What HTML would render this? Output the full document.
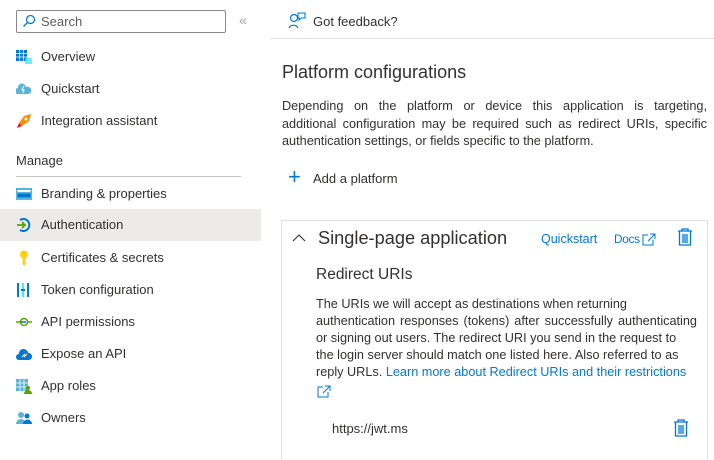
<!DOCTYPE html>
<html><head><meta charset="utf-8"><style>
*{margin:0;padding:0;box-sizing:border-box}
body{width:714px;height:441px;overflow:hidden;background:#fff;font-family:"Liberation Sans",sans-serif;color:#323130;position:relative;font-size:13px}
.a{position:absolute;white-space:nowrap}
.nav{position:absolute;left:0;width:261px;height:32px;}
.nav .ic{position:absolute;left:16px;top:8px;width:16px;height:16px}
.nav .t{position:absolute;left:41px;top:8px;font-size:13px}
.blue{color:#0078d4}
.ln{position:absolute;white-space:nowrap;text-align:justify;text-align-last:justify;font-size:12.7px;height:17.5px;line-height:17.5px}
.ln.l{text-align-last:left}
</style></head><body>
<div class="a" style="left:16px;top:10px;width:210px;height:23px;border:1px solid #8a8886;border-radius:2px"></div>
<svg class="a" style="left:22px;top:14px" width="14" height="14" viewBox="0 0 14 14"><circle cx="8.5" cy="5.5" r="4" fill="none" stroke="#0078d4" stroke-width="1.2"/><path d="M5.5 8.5L1.5 12.5" stroke="#0078d4" stroke-width="1.3"/></svg>
<div class="a" style="left:41px;top:14px;color:#605e5c;font-size:13px">Search</div>
<div class="a" style="left:239px;top:12px;color:#a19f9d;font-size:14px">«</div>

<div class="nav" style="top:41px"><svg class="ic" viewBox="0 0 16 16"><rect x="0" y="1" width="11" height="11" fill="#0078d4"/><path d="M0 4.5h11M0 8h11M3.7 1v11M7.3 1v11" stroke="#fff" stroke-width=".8"/><rect x="9" y="9" width="7" height="6" fill="#50e6ff" opacity=".8"/></svg><div class="t">Overview</div></div>
<div class="nav" style="top:73px"><svg class="ic" viewBox="0 0 16 16"><path d="M2 13a3 3 0 0 1 0-6 4 4 0 0 1 8-1 3.5 3.5 0 0 1 3 7z" fill="#59b4d9"/><path d="M8 5l-2 4h2l-1 3" stroke="#fff" stroke-width="1" fill="none"/></svg><div class="t">Quickstart</div></div>
<div class="nav" style="top:105px"><svg class="ic" viewBox="0 0 16 16"><path d="M15 1l-7 2-5 7 3 3 7-5z" fill="#ff8c00"/><path d="M3 10l-2 5 5-2z" fill="#e81123"/><circle cx="10" cy="6" r="1.5" fill="#fff"/></svg><div class="t">Integration assistant</div></div>
<div class="a" style="left:16px;top:153px;font-size:13px">Manage</div>
<div class="a" style="left:16px;top:176px;width:225px;height:1px;background:#c8c6c4"></div>
<div class="nav" style="top:178px"><svg class="ic" viewBox="0 0 16 16"><rect x="0" y="2" width="16" height="12" fill="#59b4d9"/><rect x="1.5" y="4" width="13" height="2" fill="#fff"/><rect x="1.5" y="7.5" width="13" height="4" fill="#0078d4"/></svg><div class="t">Branding &amp; properties</div></div>
<div class="nav" style="top:209px;background:#edebe9"><svg class="ic" viewBox="0 0 16 16"><path d="M4 3a6 6 0 1 1 0 10" fill="none" stroke="#0078d4" stroke-width="2"/><path d="M1 8h8M6 5l3 3-3 3" fill="none" stroke="#57a300" stroke-width="1.8"/></svg><div class="t">Authentication</div></div>
<div class="nav" style="top:242px"><svg class="ic" viewBox="0 0 16 16"><circle cx="8" cy="4.5" r="4" fill="#fcd116"/><path d="M6.5 8h3v6l-1.5 2-1.5-2z" fill="#fcd116"/><circle cx="8" cy="3.5" r="1" fill="#ffb900"/></svg><div class="t">Certificates &amp; secrets</div></div>
<div class="nav" style="top:274px"><svg class="ic" viewBox="0 0 16 16"><rect x="1" y="1" width="2" height="14" fill="#0078d4"/><rect x="6" y="1" width="2" height="14" fill="#50e6ff"/><rect x="11" y="1" width="2" height="14" fill="#0078d4"/><rect x="5" y="7" width="4" height="2" fill="#0078d4"/></svg><div class="t">Token configuration</div></div>
<div class="nav" style="top:306px"><svg class="ic" viewBox="0 0 16 16"><path d="M0 8h4M12 8h4" stroke="#57a300" stroke-width="1.5"/><circle cx="8" cy="8" r="3.5" fill="none" stroke="#57a300" stroke-width="1.5"/><path d="M5 8h5" stroke="#0078d4" stroke-width="1.5"/></svg><div class="t">API permissions</div></div>
<div class="nav" style="top:338px"><svg class="ic" viewBox="0 0 16 16"><path d="M3 14a3 3 0 0 1 0-6 4.5 4.5 0 0 1 9-1 3.5 3.5 0 0 1 1 7z" fill="#0078d4"/><path d="M6 11l3-3M8 11l3-3" stroke="#fff" stroke-width="1"/></svg><div class="t">Expose an API</div></div>
<div class="nav" style="top:370px"><svg class="ic" viewBox="0 0 16 16"><rect x="0" y="1" width="12" height="12" fill="#59b4d9"/><path d="M0 5h12M0 9h12M4 1v12M8 1v12" stroke="#fff" stroke-width=".8"/><circle cx="12" cy="10" r="2" fill="#57a300"/><path d="M8 16a4 4 0 0 1 8 0z" fill="#57a300"/></svg><div class="t">App roles</div></div>
<div class="nav" style="top:402px"><svg class="ic" viewBox="0 0 16 16"><circle cx="5" cy="5" r="3" fill="#59b4d9"/><path d="M0 14a5 5 0 0 1 10 0z" fill="#59b4d9"/><circle cx="11" cy="6" r="2.5" fill="#0078d4"/><path d="M7 14a4 4 0 0 1 9 0z" fill="#0078d4"/></svg><div class="t">Owners</div></div>

<svg class="a" style="left:288px;top:12px" width="18" height="18" viewBox="0 0 18 18"><circle cx="6" cy="6" r="3.5" fill="none" stroke="#0078d4" stroke-width="1.2"/><path d="M1 16a5 5 0 0 1 9 0" fill="none" stroke="#0078d4" stroke-width="1.2"/><path d="M10 1h7v5h-4l-2 2v-2h-1z" fill="none" stroke="#0078d4" stroke-width="1.1"/></svg>
<div class="a" style="left:313px;top:14px;font-size:13px">Got feedback?</div>
<div class="a" style="left:270px;top:38px;width:444px;height:1px;background:#e1dfdd"></div>
<div class="a" style="left:282px;top:62px;font-size:18px">Platform configurations</div>
<div class="ln" style="left:282px;top:98px;width:425px">Depending on the platform or device this application is targeting,</div>
<div class="ln" style="left:282px;top:115.5px;width:425px">additional configuration may be required such as redirect URIs, specific</div>
<div class="ln l" style="left:282px;top:133px;width:425px">authentication settings, or fields specific to the platform.</div>
<div class="a" style="left:288px;top:166px;font-size:22px;font-weight:300;color:#0078d4;line-height:22px">+</div>
<div class="a" style="left:313px;top:171px;font-size:13px">Add a platform</div>

<div class="a" style="left:281px;top:220px;width:427px;height:240px;border:1px solid #e1dfdd;border-bottom:none"></div>
<svg class="a" style="left:292px;top:233px" width="14" height="10" viewBox="0 0 14 10"><path d="M1 8l6-6 6 6" fill="none" stroke="#323130" stroke-width="1.1"/></svg>
<div class="a" style="left:318px;top:228px;font-size:18.2px">Single-page application</div>
<div class="a blue" style="left:541px;top:232px;font-size:12.5px">Quickstart</div>
<div class="a blue" style="left:614px;top:232px;font-size:11.8px;letter-spacing:-.3px">Docs</div>
<svg class="a" style="left:642px;top:233px" width="14" height="13" viewBox="0 0 14 13"><path d="M6 2H1v10h10V7M8 1h5v5M13 1L6 8" fill="none" stroke="#0078d4" stroke-width="1"/></svg>
<svg class="a" style="left:677px;top:228px" width="16" height="18" viewBox="0 0 16 18"><path d="M1 3h14M5 3V1h6v2M2.5 3v14h11V3M6 6v9M8 6v9M10 6v9" fill="none" stroke="#0078d4" stroke-width="1.3"/></svg>
<div class="a" style="left:316px;top:266px;font-size:15.5px">Redirect URIs</div>
<div class="ln l" style="left:316px;top:296px;width:382px">The URIs we will accept as destinations when returning</div>
<div class="ln" style="left:316px;top:313px;width:381px">authentication responses (tokens) after successfully authenticating</div>
<div class="ln l" style="left:316px;top:330px;width:382px">or signing out users. The redirect URI you send in the request to</div>
<div class="ln l" style="left:316px;top:347px;width:382px">the login server should match one listed here. Also referred to as</div>
<div class="ln l" style="left:316px;top:364px;width:382px">reply URLs. <span class="blue">Learn more about Redirect URIs and their restrictions</span></div>
<svg class="a" style="left:317px;top:385px" width="14" height="13" viewBox="0 0 14 13"><path d="M6 2H1v10h10V7M8 1h5v5M13 1L6 8" fill="none" stroke="#0078d4" stroke-width="1"/></svg>
<div class="a" style="left:332px;top:421px;font-size:13px">https://jwt.ms</div>
<svg class="a" style="left:673px;top:419px" width="16" height="18" viewBox="0 0 16 18"><path d="M1 3h14M5 3V1h6v2M2.5 3v14h11V3M6 6v9M8 6v9M10 6v9" fill="none" stroke="#0078d4" stroke-width="1.3"/></svg>
</body></html>
